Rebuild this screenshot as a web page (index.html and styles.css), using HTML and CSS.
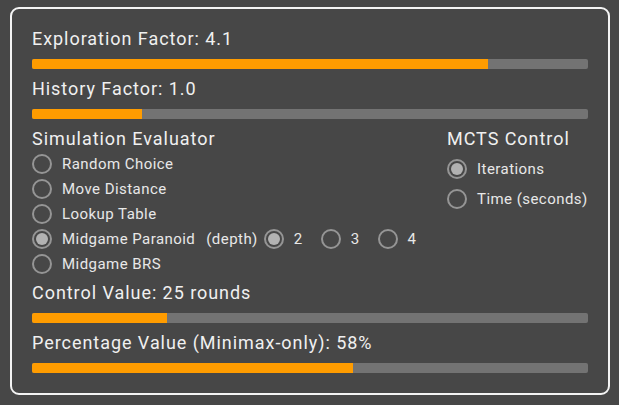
FILE: index.html
```html
<!DOCTYPE html>
<html>
<head>
<meta charset="utf-8">
<link rel="stylesheet" href="styles.css">
</head>
<body>
<div class="panel">
  <div class="slider">
    <div class="label">Exploration Factor: 4.1</div>
    <div class="track"><div class="fill" style="width:82.0%"></div></div>
  </div>
  <div class="slider">
    <div class="label">History Factor: 1.0</div>
    <div class="track"><div class="fill" style="width:19.8%"></div></div>
  </div>
  <div class="groups">
    <div class="group">
      <div class="label">Simulation Evaluator</div>
      <div class="opt"><span class="radio"></span><span>Random Choice</span></div>
      <div class="opt"><span class="radio"></span><span>Move Distance</span></div>
      <div class="opt"><span class="radio"></span><span>Lookup Table</span></div>
      <div class="opt"><span class="radio on"></span><span>Midgame Paranoid</span>
        <span class="depth">(depth)</span>
        <span class="sub"><span class="radio on"></span><span>2</span></span>
        <span class="sub"><span class="radio"></span><span>3</span></span>
        <span class="sub"><span class="radio"></span><span>4</span></span>
      </div>
      <div class="opt"><span class="radio"></span><span>Midgame BRS</span></div>
    </div>
    <div class="group mcts">
      <div class="label">MCTS Control</div>
      <div class="opt tall"><span class="radio on"></span><span>Iterations</span></div>
      <div class="opt tall"><span class="radio"></span><span>Time (seconds)</span></div>
    </div>
  </div>
  <div class="slider">
    <div class="label">Control Value: 25 rounds</div>
    <div class="track"><div class="fill" style="width:24.3%"></div></div>
  </div>
  <div class="slider">
    <div class="label">Percentage Value (Minimax-only): 58%</div>
    <div class="track"><div class="fill" style="width:57.7%"></div></div>
  </div>
</div>
</body>
</html>
```
FILE: styles.css
```css
html, body {
  margin: 0;
  padding: 0;
  background: #474747;
}
body {
  font-family: Roboto, "Liberation Sans", sans-serif;
  color: #f0f0f0;
}
.panel {
  box-sizing: border-box;
  width: 600px;
  height: 388px;
  margin: 7px 0 0 10px;
  border: 2px solid #f4f4f4;
  border-radius: 9px;
  padding: 18px 20px 0 20px;
}
.label {
  font-size: 18px;
  line-height: 24px;
  height: 24px;
  letter-spacing: 0.95px;
  white-space: nowrap;
}
.slider .track {
  margin: 8px 0 8px 0;
  height: 10px;
  border-radius: 2px;
  background: #737373;
  overflow: hidden;
}
.slider .fill {
  height: 100%;
  background: #ff9c00;
}
.groups {
  display: flex;
  justify-content: space-between;
  margin-top: 1px;
  height: 154px;
}
.opt {
  display: flex;
  align-items: center;
  height: 25px;
  font-size: 15px;
  letter-spacing: 0.45px;
  color: #e8e8e8;
  white-space: nowrap;
}
.opt.tall {
  height: 30px;
}
.mcts .label {
  margin-bottom: 3px;
}
.mcts {
  width: 141px;
}
.radio {
  box-sizing: border-box;
  width: 20px;
  height: 20px;
  border: 2px solid #959595;
  border-radius: 50%;
  margin-right: 10px;
  flex: none;
  display: flex;
  align-items: center;
  justify-content: center;
}
.radio.on::after {
  content: "";
  width: 12px;
  height: 12px;
  border-radius: 50%;
  background: #b2b2b2;
}
.depth {
  margin-left: 11px;
  margin-right: 6px;
}
.sub {
  display: flex;
  align-items: center;
  margin-right: 18px;
}
```
